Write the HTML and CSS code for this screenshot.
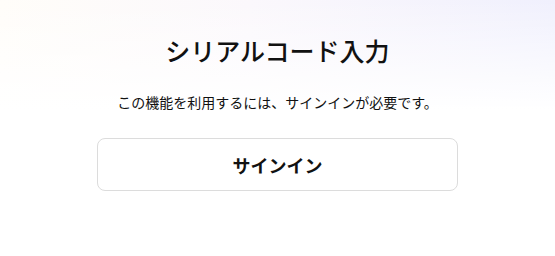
FILE: index.html
```html
<!DOCTYPE html>
<html lang="ja">
<head>
  <meta charset="utf-8">
  <link rel="stylesheet" href="styles.css">
</head>
<body>
  <div class="panel">
    <h1 class="title">シリアルコード入力</h1>
    <p class="notice">この機能を利用するには、サインインが必要です。</p>
    <button class="signin">サインイン</button>
  </div>
</body>
</html>
```

FILE: styles.css
```css
body {
  margin: 0;
  min-height: 100vh;
  background:
    linear-gradient(to bottom, rgba(255,255,255,0) 0%, #fff 110px),
    linear-gradient(to right, #fffdf9 0%, #fbf8fc 45%, #f0f0fd 100%);
  font-family: "Noto Sans CJK JP", "Noto Sans", sans-serif;
  color: #111;
}

.panel {
  width: 361px;
  margin: 0 auto;
  padding-top: 32px;
  display: flex;
  flex-direction: column;
  align-items: center;
}

.title {
  margin: 0;
  font-size: 25px;
  line-height: 36px;
  font-weight: 500;
}

.notice {
  margin: 24px 0 0;
  font-size: 14px;
  line-height: 20px;
}

.signin {
  margin-top: 26px;
  width: 100%;
  height: 53px;
  background: #fff;
  border: 1px solid #dcdcdc;
  border-radius: 8px;
  font-family: inherit;
  font-size: 18px;
  font-weight: 700;
  color: #111;
  cursor: pointer;
}
```
